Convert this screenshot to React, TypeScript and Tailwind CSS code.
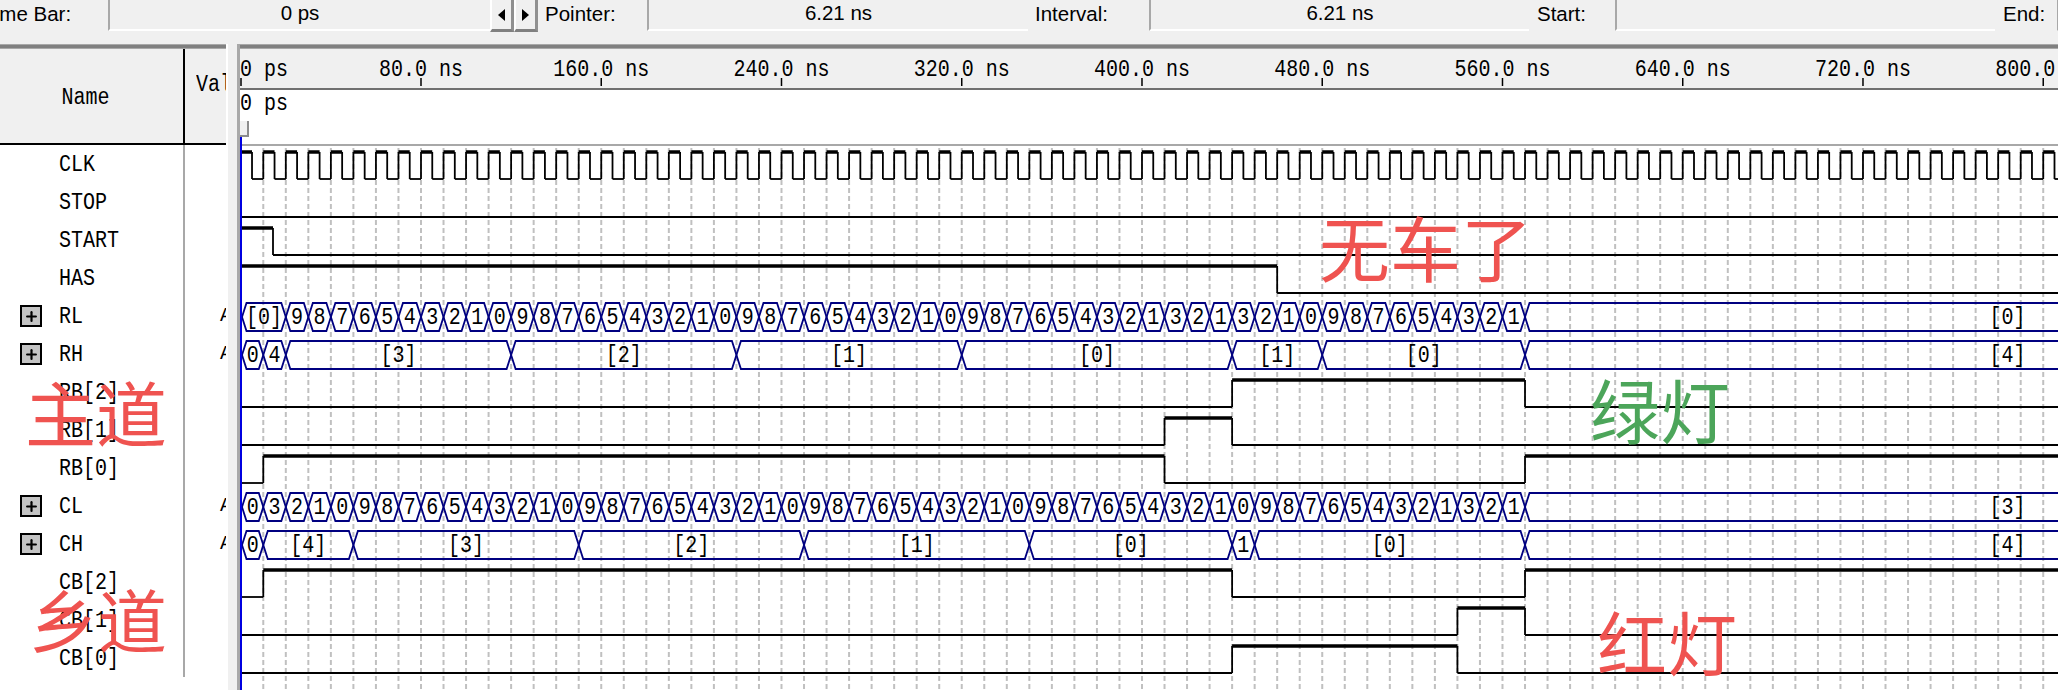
import React from 'react';
import { Plus } from 'lucide-react';

// time (ns) to page x
const X = (t: number) => 240.75 + 2.2531 * t;
const END = 2060;
const high = (row: number) => 152 + 38 * row;

type BusSeg = [number, number, string];

const seq = (from: number, labels: string) =>
  labels.split('').map((l, i): BusSeg => [from + i * 10, from + (i + 1) * 10, l]);

const rlSegs: BusSeg[] = [
  [0, 20, '[0]'],
  ...seq(20, '9876543210' + '9876543210' + '9876543210' + '987654321' + '321' + '3210' + '987654321'),
];
const rhSegs: BusSeg[] = [
  [0, 10, '0'],
  [10, 20, '4'],
  [20, 120, '[3]'],
  [120, 220, '[2]'],
  [220, 320, '[1]'],
  [320, 440, '[0]'],
  [440, 480, '[1]'],
  [480, 570, '[0]'],
];
const clSegs: BusSeg[] = seq(
  0,
  '0' + '3210' + '9876543210' + '9876543210' + '9876543210' + '9876543210' + '987654' + '321' + '321',
);
const chSegs: BusSeg[] = [
  [0, 10, '0'],
  [10, 50, '[4]'],
  [50, 150, '[3]'],
  [150, 250, '[2]'],
  [250, 350, '[1]'],
  [350, 440, '[0]'],
  [440, 450, '1'],
  [450, 570, '[0]'],
];

// the capture uses a narrow bitmap font, so the mono face is squeezed to a 12px pitch
function MonoText({ x, y, anchor, children }: { x: number; y: number; anchor?: 'middle'; children: React.ReactNode }) {
  return (
    <text transform={`translate(${x} ${y}) scale(0.87 1)`} textAnchor={anchor} fontSize={23} fill="#000">
      {children}
    </text>
  );
}

function Bus({ top, segs, last }: { top: number; segs: BusSeg[]; last: string }) {
  const bot = top + 28;
  const mid = top + 14;
  const tail = X(570);
  return (
    <g>
      {segs.map(([a, b, label], i) => {
        const x0 = i === 0 ? 242 : X(a);
        const x1 = X(b);
        return (
          <g key={i}>
            <path
              d={`M${x0} ${mid}L${x0 + 4.5} ${top}L${x1 - 4.5} ${top}L${x1} ${mid}L${x1 - 4.5} ${bot}L${x0 + 4.5} ${bot}Z`}
              fill="none"
              stroke="#000080"
              strokeWidth={1.8}
            />
            <MonoText x={(x0 + x1) / 2} y={mid + 6.5} anchor="middle">
              {label}
            </MonoText>
          </g>
        );
      })}
      <path
        d={`M${END} ${top}L${tail + 4.5} ${top}L${tail} ${mid}L${tail + 4.5} ${bot}L${END} ${bot}`}
        fill="none"
        stroke="#000080"
        strokeWidth={1.8}
      />
      <MonoText x={2007.5} y={mid + 6.5} anchor="middle">
        {last}
      </MonoText>
    </g>
  );
}

// edges are page x values, the level flips at each one
function Digital({ row, startHigh, edges }: { row: number; startHigh: boolean; edges: number[] }) {
  const hi = high(row);
  const lo = hi + 27;
  const xs = [242, ...edges, END];
  return (
    <g stroke="#000">
      {xs.slice(0, -1).map((x, i) => {
        const isHigh = i % 2 === 0 ? startHigh : !startHigh;
        return (
          <line
            key={i}
            x1={x}
            x2={xs[i + 1]}
            y1={isHigh ? hi : lo}
            y2={isHigh ? hi : lo}
            strokeWidth={isHigh ? 3.5 : 1.8}
          />
        );
      })}
      {edges.map((x) => (
        <line key={x} x1={x} x2={x} y1={hi} y2={lo} strokeWidth={1.8} />
      ))}
    </g>
  );
}

const clkEdges: number[] = [];
for (let t = 5; t < 815; t += 5) clkEdges.push(X(t));

const rulerLabels = ['80.0', '160.0', '240.0', '320.0', '400.0', '480.0', '560.0', '640.0', '720.0', '800.0'];

function Waveform() {
  const grid: number[] = [];
  for (let t = 10; t <= 810; t += 10) grid.push(X(t));
  return (
    <svg
      width={1818}
      height={641}
      viewBox="240 49 1818 641"
      className="block font-['Liberation_Mono',monospace]"
    >
      <rect x={240} y={49} width={1818} height={641} fill="#fff" />
      <rect x={240} y={49} width={1818} height={39} fill="#f0f0f0" />
      <rect x={240} y={88} width={1818} height={2} fill="#707070" />
      <rect x={240} y={144} width={1818} height={2} fill="#a8a8a8" />

      {/* ruler */}
      <MonoText x={240} y={76}>
        0 ps
      </MonoText>
      <line x1={241} x2={241} y1={78} y2={86} stroke="#000" strokeWidth={1.5} />
      {rulerLabels.map((label, i) => {
        const x = X(80 * (i + 1));
        return (
          <g key={label}>
            <MonoText x={x} y={76} anchor="middle">
              {label} ns
            </MonoText>
            <line x1={x} x2={x} y1={78} y2={86} stroke="#000" strokeWidth={1.5} />
          </g>
        );
      })}

      {/* cursor */}
      <MonoText x={240} y={110}>
        0 ps
      </MonoText>
      <rect x={240} y={121} width={9} height={16} fill="#f0f0f0" />
      <path d="M248 121V136H240" fill="none" stroke="#8c8c8c" strokeWidth={2} />

      {/* grid */}
      {grid.map((x) => (
        <line
          key={x}
          x1={x}
          x2={x}
          y1={148}
          y2={690}
          stroke="#c0c0c0"
          strokeWidth={2}
          strokeDasharray="5 3"
        />
      ))}

      <Digital row={0} startHigh edges={clkEdges} />
      <Digital row={1} startHigh={false} edges={[]} />
      <Digital row={2} startHigh edges={[273]} />
      <Digital row={3} startHigh edges={[X(460)]} />
      <Bus top={303} segs={rlSegs} last="[0]" />
      <Bus top={341} segs={rhSegs} last="[4]" />
      <Digital row={6} startHigh={false} edges={[X(440), X(570)]} />
      <Digital row={7} startHigh={false} edges={[X(410), X(440)]} />
      <Digital row={8} startHigh={false} edges={[X(10), X(410), X(570)]} />
      <Bus top={493} segs={clSegs} last="[3]" />
      <Bus top={531} segs={chSegs} last="[4]" />
      <Digital row={11} startHigh={false} edges={[X(10), X(440), X(570)]} />
      <Digital row={12} startHigh={false} edges={[X(540), X(570)]} />
      <Digital row={13} startHigh={false} edges={[X(440), X(540)]} />

      <rect x={240} y={137} width={2} height={553} fill="#0000e0" />
    </svg>
  );
}

function Field({ width, children }: { width: string; children?: React.ReactNode }) {
  return (
    <div
      className={`${width} h-[31px] shrink-0 flex items-center justify-center border-l-2 border-l-[#a8a8a8] border-b-2 border-b-white pb-[2px]`}
    >
      {children}
    </div>
  );
}

function StepButton({ dir }: { dir: 'left' | 'right' }) {
  return (
    <div className="w-[24px] h-[32px] flex items-center justify-center bg-[#f0f0f0] border-l-2 border-l-white border-r-[3px] border-r-[#909090] border-b-[3px] border-b-[#808080]">
      <svg width={7} height={12} viewBox="0 0 7 12">
        <path d={dir === 'left' ? 'M7 0V12L0 6Z' : 'M0 0V12L7 6Z'} fill="#000" />
      </svg>
    </div>
  );
}

const signals = [
  { name: 'CLK' },
  { name: 'STOP' },
  { name: 'START' },
  { name: 'HAS' },
  { name: 'RL', bus: true },
  { name: 'RH', bus: true },
  { name: 'RB[2]' },
  { name: 'RB[1]' },
  { name: 'RB[0]' },
  { name: 'CL', bus: true },
  { name: 'CH', bus: true },
  { name: 'CB[2]' },
  { name: 'CB[1]' },
  { name: 'CB[0]' },
];

function SignalRow({ name, bus }: { name: string; bus?: boolean }) {
  return (
    <div className="flex h-[38px]">
      <div className="w-[185px] shrink-0 flex items-center border-r-2 border-r-[#a8a8a8]">
        <div className="w-[59px] shrink-0 pl-[20px]">
          {bus && (
            <div className="w-[22px] h-[22px] flex items-center justify-center bg-[#c4c4c4] border-2 border-black">
              <Plus size={15} strokeWidth={3.5} color="#000" />
            </div>
          )}
        </div>
        <span className="inline-block origin-left scale-x-[0.87] pt-[2px] text-[23px] leading-none">{name}</span>
      </div>
      <div className="w-[41px] shrink-0 overflow-hidden flex items-center pl-[35px]">
        {bus && <span className="text-[20px] leading-none">A</span>}
      </div>
    </div>
  );
}

const noteClass = "absolute leading-none font-['Noto_Sans_CJK_SC',sans-serif] whitespace-nowrap";

export default function App() {
  return (
    <div className="relative w-[2058px] h-[690px] overflow-hidden bg-[#f0f0f0] text-black">
      {/* time bar */}
      <div className="h-[44px] flex items-start font-['Liberation_Sans',sans-serif] text-[20.5px] leading-none">
        <div className="w-[108px] shrink-0 h-[28px] flex items-center overflow-hidden">
          <span className="-ml-[17px] whitespace-nowrap">Time Bar:</span>
        </div>
        <Field width="w-[382px]">0 ps</Field>
        <div className="flex shrink-0 w-[48px]">
          <StepButton dir="left" />
          <StepButton dir="right" />
        </div>
        <div className="w-[109px] shrink-0 h-[28px] flex items-center pl-[7px]">Pointer:</div>
        <Field width="w-[381px]">6.21 ns</Field>
        <div className="w-[121px] shrink-0 h-[28px] flex items-center pl-[7px]">Interval:</div>
        <Field width="w-[380px]">6.21 ns</Field>
        <div className="w-[86px] shrink-0 h-[28px] flex items-center pl-[8px]">Start:</div>
        <Field width="w-[380px]" />
        <div className="w-[62px] shrink-0 h-[28px] flex items-center pl-[8px]">End:</div>
        <Field width="w-[1px]" />
      </div>

      <div className="flex h-[646px] font-['Liberation_Mono',monospace]">
        {/* names */}
        <div className="w-[226px] shrink-0 bg-white flex flex-col">
          <div className="h-[5px] bg-[#808080] border-y border-y-[#a8a8a8]" />
          <div className="h-[96px] flex bg-[#f0f0f0] border-b-2 border-b-black">
            <div className="w-[185px] shrink-0 flex items-center justify-center border-r-2 border-r-black pt-[4px] pr-[12px]">
              <span className="inline-block scale-x-[0.87] text-[23px] leading-none">Name</span>
            </div>
            <div className="w-[41px] shrink-0 overflow-hidden pl-[11px] pt-[25px]">
              <span className="inline-block origin-left scale-x-[0.87] text-[23px] leading-none">Val</span>
            </div>
          </div>
          {signals.map((s) => (
            <SignalRow key={s.name} name={s.name} bus={s.bus} />
          ))}
        </div>

        {/* splitter */}
        <div className="w-[11px] shrink-0 bg-[#f0f0f0] border-l-2 border-l-white" />

        {/* waveforms */}
        <div className="flex-1 flex flex-col border-l-[3px] border-l-[#a8a8a8] min-w-0">
          <div className="h-[5px] bg-[#808080] border-y border-y-[#a8a8a8]" />
          <Waveform />
        </div>
      </div>

      {/* notes written over the screenshot */}
      <div className={`${noteClass} left-[25px] top-[375px] text-[71px] text-[#ef5350]`}>主道</div>
      <div className={`${noteClass} left-[29px] top-[584px] text-[69px] text-[#ef5350]`}>乡道</div>
      <div className={`${noteClass} left-[1319px] top-[210px] text-[71px] text-[#ef5350]`}>无车了</div>
      <div className={`${noteClass} left-[1590px] top-[374px] text-[70px] text-[#4ca55a]`}>绿灯</div>
      <div className={`${noteClass} left-[1597px] top-[606px] text-[70px] text-[#ef5350]`}>红灯</div>
    </div>
  );
}
